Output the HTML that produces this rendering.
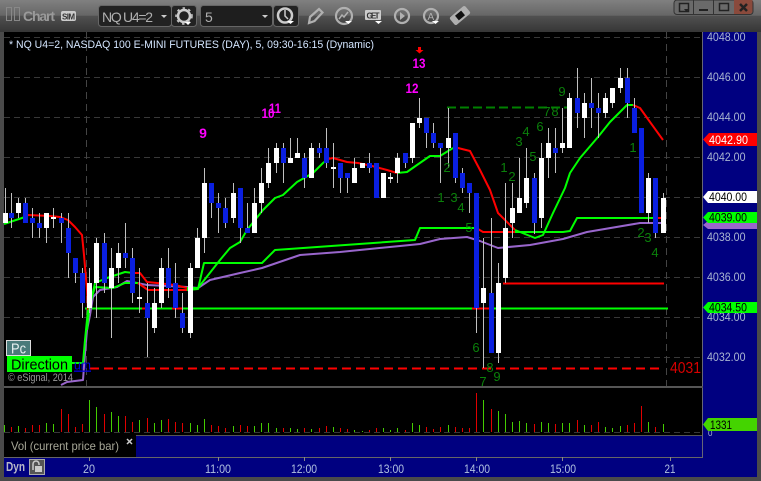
<!DOCTYPE html>
<html><head><meta charset="utf-8"><style>
html,body{margin:0;padding:0;background:#4a4a4a;overflow:hidden}
svg{display:block}
text{font-family:"Liberation Sans",sans-serif}
</style></head><body>
<svg width="761" height="481" viewBox="0 0 761 481" xmlns="http://www.w3.org/2000/svg">
<defs><linearGradient id="t" x1="0" y1="0" x2="0" y2="1"><stop offset="0" stop-color="#808080"/><stop offset=".48" stop-color="#666"/><stop offset=".5" stop-color="#505050"/><stop offset="1" stop-color="#363636"/></linearGradient></defs>
<rect width="761" height="481" fill="#4a4a4a"/>
<rect width="761" height="32" fill="url(#t)"/>
<!-- title bar -->
<g fill="none" stroke="#888" stroke-width="1"><rect x="6.500" y="7.500" width="5" height="13"/><rect x="14.500" y="7.500" width="5" height="13"/></g>
<text x="23" y="21" font-size="14" font-weight="bold" fill="#9a9a9a" textLength="32">Chart</text>
<rect x="61" y="11" width="15" height="10" rx="2" fill="#ccc"/><text x="62" y="19.500" font-size="8" font-weight="bold" fill="#333" textLength="13">SIM</text>
<rect x="98.500" y="5.500" width="73" height="21" rx="3" fill="#222" stroke="#666"/>
<text x="102" y="22" font-size="14" fill="#b0b0b0" textLength="51">NQ U4=2</text>
<path d="M161 15h6l-3 3z" fill="#ccc"/>
<rect x="171.500" y="5.500" width="25" height="21" rx="3" fill="#222" stroke="#666"/>
<circle cx="184" cy="16" r="6" fill="none" stroke="#ccc" stroke-width="2.500"/><circle cx="184" cy="16" r="8" fill="none" stroke="#ccc" stroke-width="1.500" stroke-dasharray="2.500 3.500"/>
<path d="M185 22h6l-3 3z" fill="#fff"/>
<rect x="200.500" y="5.500" width="72" height="21" rx="3" fill="#1e1e1e" stroke="#666"/>
<text x="205" y="22" font-size="14" fill="#b0b0b0">5</text>
<path d="M262 15h6l-3 3z" fill="#ccc"/>
<rect x="273.500" y="5.500" width="25" height="21" rx="3" fill="#222" stroke="#666"/>
<circle cx="285" cy="15.500" r="7" fill="none" stroke="#ccc" stroke-width="2.500"/><path d="M285 10v6l3 3" fill="none" stroke="#ccc" stroke-width="1.500"/><path d="M287 21h7l-3.500 3z" fill="#fff"/>
<!-- tools -->
<path d="M309 23l1-6 9-8 3.500 3.500-8 8.500z" fill="none" stroke="#b0b0b0" stroke-width="2.200"/>
<circle cx="344" cy="16" r="8" fill="none" stroke="#b0b0b0" stroke-width="2.200"/><path d="M339 19l3-4 2 2 4-5" fill="none" stroke="#b0b0b0" stroke-width="1.500"/><path d="M345 21h7l-3.500 3z" fill="#fff"/>
<rect x="365" y="10" width="16" height="10" rx="1" fill="#ccc"/><text x="366.500" y="18.500" font-size="8" font-weight="bold" fill="#333" textLength="13">GET</text><path d="M375 21h7l-3.500 3z" fill="#fff"/>
<circle cx="402" cy="16" r="7" fill="none" stroke="#b0b0b0" stroke-width="2.200"/><path d="M400 12l5 4-5 4z" fill="#b0b0b0"/>
<circle cx="431" cy="16" r="7" fill="none" stroke="#b0b0b0" stroke-width="2.200"/><text x="427.500" y="20" font-size="10" fill="#b0b0b0">A</text><path d="M432 21h7l-3.500 3z" fill="#fff"/>
<g transform="rotate(-40 460 15.500)"><rect x="450" y="10.500" width="20" height="10" rx="2" fill="#b0b0b0"/><rect x="456" y="12.500" width="8" height="6" fill="#111"/></g>
<!-- window buttons -->
<rect x="674" y="0" width="79" height="14.500" rx="3" fill="#6a6a6a" stroke="#333"/>
<path d="M693.500 0v14M713.500 0v14" stroke="#333"/>
<path d="M734 0h18.500v11a3 3 0 0 1-3 3h-15.500z" fill="#8a4a3c"/>
<rect x="679.500" y="3.500" width="9" height="8" fill="none" stroke="#222" stroke-width="1.500"/><path d="M684 9h5l-2.500 3z" fill="#222"/>
<rect x="699" y="9" width="9" height="2" fill="#222"/>
<rect x="719.500" y="3.500" width="9" height="7" fill="none" stroke="#222" stroke-width="1.500"/>
<path d="M740 4l7 7M747 4l-7 7" stroke="#222" stroke-width="2.500"/>
<!-- main panel -->
<rect x="4" y="32" width="699" height="354" fill="#000"/>
<rect x="703" y="32" width="54" height="445" fill="#000080"/>
<rect x="702" y="32" width="1" height="425" fill="#667"/>
<rect x="4" y="386" width="699" height="2" fill="#555"/>
<rect x="4" y="388" width="698" height="47" fill="#000"/>
<rect x="4" y="435" width="698" height="22" fill="#000080"/>
<rect x="4" y="435" width="132" height="22" fill="#000"/>
<rect x="136" y="435" width="566" height="1" fill="#555"/>
<rect x="4" y="457" width="699" height="20" fill="#000080"/>
<rect x="4" y="457" width="699" height="1" fill="#666"/>
<!-- grid -->
<g stroke="#383838" shape-rendering="crispEdges" stroke-dasharray="6 4" fill="none">
<path d="M4 37.500H702M4 77.500H702M4 117.500H702M4 157.500H702M4 197.500H702M4 237.500H702M4 277.500H702M4 317.500H702M94 357.500H702M4 432.500H702"/>
<path d="M86.500 32V386M666.500 32V386" stroke="#444" stroke-dasharray="7 5"/>
</g>
<!-- indicator lines -->
<g fill="none" stroke-linejoin="round">
<path d="M85 308.500H668" stroke="#00ff00" stroke-width="2"/>
<path d="M142 308.500h6M172 308.500h10M472 308.500h18" stroke="#f00" stroke-width="2"/>
<path d="M503 283.500H664" stroke="#f00" stroke-width="2"/>
<path d="M90 368.500H664" stroke="#f00" stroke-width="2" stroke-dasharray="9 5"/>
<path d="M447 107.500H568" stroke="#008000" stroke-width="2" stroke-dasharray="9 4"/>
<path d="M61 385L67 382 83 380 85 353 87 330 90 315 93 297 100 290 117 287 127 281 147 285 187 287 198 288 210 280 240 273 262 268 300 255 340 252 400 246 420 244 440 239 467 237 480 241 498 248 530 245 563 239 587 232 640 223 663 223" stroke="#9966cc" stroke-width="2"/>
<path d="M72 363H83L85 340 88 310 95 287 113 288 125 283H138" stroke="#00ff00" stroke-width="2"/>
<path d="M138 283L148 290H187" stroke="#f00" stroke-width="2"/>
<path d="M187 290L198 289 204 263H262L275 250 415 240 420 228H478" stroke="#00ff00" stroke-width="2"/>
<path d="M478 229L483 232H515" stroke="#f00" stroke-width="2"/>
<path d="M515 232H563L570 231 577 218H653" stroke="#00ff00" stroke-width="2"/>
<path d="M653 218H664" stroke="#f00" stroke-width="2"/>
<path d="M4 224L16 220 28 216" stroke="#00ff00" stroke-width="2"/>
<path d="M28 215L50 216 60 217 68 220 75 227 82 235 84 255 87 290 88 310" stroke="#f00" stroke-width="2"/>
<path d="M87 330L89 310 95 283 107 278 125 272 133 273" stroke="#00ff00" stroke-width="2"/>
<path d="M133 273L140 273 147 282 157 283 175 285 187 288" stroke="#f00" stroke-width="2"/>
<path d="M187 288L198 288 220 260 230 248 240 242 247 230 263 210 275 198 283 195 297 182 313 173 323 163 328 159" stroke="#00ff00" stroke-width="2"/>
<path d="M328 159L333 158 347 162 358 163 372 166 387 170 397 173" stroke="#f00" stroke-width="2"/>
<path d="M397 173L407 172 417 165 430 156 440 156 453 148" stroke="#00ff00" stroke-width="2"/>
<path d="M453 148L458 148 470 151 480 170 490 190 498 213 515 230" stroke="#f00" stroke-width="2"/>
<path d="M515 230L535 238 543 235 553 213 565 188 570 173 580 158 598 137 610 122 627 105 633 105" stroke="#00ff00" stroke-width="2"/>
<path d="M633 105L640 108 650 122 663 140" stroke="#f00" stroke-width="2"/>
</g>
<!-- candles -->
<g transform="translate(.5,0)" fill="none" shape-rendering="crispEdges">
<path stroke="#c0c0c0" d="M5 188V223M11 193V228M18 198V218M25 198V223M32 208V238M39 213V238M46 213V243M53 208V228M61 213V243M68 213V278M75 258V283M82 268V318M89 268V313M96 238V318M104 233V293M111 248V338M118 243V283M125 223V268M132 248V303M139 268V313M147 283V357M154 288V333M161 258V308M168 248V298M175 263V318M182 293V333M190 263V338M197 228V253M204 168V253M211 183V218M218 193V233M225 198V228M233 183V223M240 188V243M247 203V233M254 188V233M261 168V213M268 148V188M276 143V173M283 143V183M290 138V163M297 138V158M304 153V188M311 143V178M319 143V158M326 128V168M333 143V188M340 163V193M347 173V193M354 158V183M362 163V168M369 153V173M376 163V198M383 173V198M390 173V183M397 153V183M405 153V168M412 123V163M419 98V128M426 118V148M433 123V148M440 143V183M448 108V168M455 133V183M462 168V193M469 183V213M476 193V333M483 238V368M491 218V353M498 263V363M505 183V283M512 183V238M519 158V213M526 148V208M534 173V234M541 143V228M548 128V178M555 128V173M562 108V153M569 93V148M577 68V128M584 93V138M591 78V128M598 93V138M605 93V118M612 88V108M620 68V93M627 68V118M634 98V133M641 128V213M648 173V223M655 178V238M663 193V233"/>
<path stroke="#fff" stroke-width="5" d="M5 213V223M18 203V213M46 213V228M53 217V219M89 283V308M96 243V283M111 268V288M118 253V268M139 297V299M154 303V328M161 268V303M190 268V333M197 238V268M204 183V238M233 193V218M254 203V233M261 183V203M268 163V183M276 148V163M290 158V163M297 153V158M311 148V178M333 167V169M354 168V183M362 163V168M383 173V198M390 177V179M397 158V173M412 123V158M419 118V123M448 138V148M483 288V303M498 283V353M505 228V278M512 208V223M519 198V213M526 178V203M541 158V218M548 143V158M562 143V148M569 98V148M584 103V118M605 98V113M612 88V103M620 78V88M648 178V213M663 198V233"/>
<path stroke="#0a1fe0" stroke-width="5" d="M11 213V218M25 203V223M32 218V223M39 223V228M61 218V223M68 228V253M75 258V273M82 273V303M104 243V283M125 253V258M132 258V293M147 303V318M168 268V288M175 283V308M182 313V328M211 183V203M218 203V208M225 208V223M240 188V228M247 228V233M283 148V163M304 158V178M319 148V153M326 148V163M340 163V178M347 173V178M369 163V168M376 163V198M405 153V163M426 118V133M433 133V143M440 143V148M455 133V178M462 173V188M469 183V193M476 193V308M491 293V353M534 178V223M555 148V153M577 98V113M591 103V108M598 108V113M627 78V103M634 108V133M641 128V213M655 178V233"/>
</g>
<!-- volume -->
<g transform="translate(.5,0)" fill="none" shape-rendering="crispEdges">
<path stroke="#44cc00" d="M4 432V425M18 432V426M46 432V423M53 432V424M89 432V400M96 432V407M111 432V412M118 432V416M139 432V420M154 432V423M161 432V420M190 432V423M197 432V425M204 432V419M233 432V426M254 432V426M261 432V423M268 432V423M276 432V428M290 432V428M297 432V429M311 432V429M333 432V427M354 432V430M362 432V431M383 432V428M390 432V430M397 432V428M412 432V423M419 432V425M448 432V425M483 432V400M498 432V411M505 432V414M512 432V422M519 432V421M526 432V423M541 432V422M548 432V423M562 432V423M569 432V423M584 432V425M605 432V427M612 432V428M620 432V426M648 432V422M663 432V424"/>
<path stroke="#e00000" d="M11 432V427M25 432V428M32 432V425M39 432V425M61 432V409M68 432V414M75 432V427M82 432V424M104 432V414M125 432V416M132 432V422M147 432V418M168 432V419M175 432V422M182 432V423M211 432V425M218 432V426M225 432V428M240 432V425M247 432V426M283 432V428M304 432V428M319 432V428M326 432V426M340 432V428M347 432V429M369 432V430M376 432V428M405 432V430M426 432V427M433 432V429M440 432V427M455 432V427M462 432V428M469 432V428M476 432V393M491 432V409M534 432V424M555 432V424M577 432V420M591 432V425M598 432V422M627 432V425M634 432V423M641 432V406M655 432V427"/>
</g>
<!-- title text -->
<text x="9" y="48" font-size="11" fill="#d4e6ff" textLength="365" lengthAdjust="spacingAndGlyphs">* NQ U4=2, NASDAQ 100 E-MINI FUTURES (DAY), 5, 09:30-16:15 (Dynamic)</text>
<!-- magenta labels -->
<g font-size="14" font-weight="bold" fill="#ff00ff" text-anchor="middle">
<text x="203" y="138">9</text>
<text x="268" y="118" textLength="13" lengthAdjust="spacingAndGlyphs">10</text>
<text x="275" y="113" textLength="12" lengthAdjust="spacingAndGlyphs">11</text>
<text x="412" y="93" textLength="13" lengthAdjust="spacingAndGlyphs">12</text>
<text x="419" y="68" textLength="13" lengthAdjust="spacingAndGlyphs">13</text>
</g>
<path d="M418 47h3v3h2.500l-4 3.500-4-3.500h2.500z" fill="#f00"/>
<!-- green labels -->
<g font-size="13" fill="#0a800a" text-anchor="middle">
<text x="441" y="202">1</text><text x="454" y="202">3</text><text x="461" y="212">4</text><text x="469" y="232">5</text><text x="476" y="352">6</text><text x="483" y="386">7</text><text x="490" y="372">8</text><text x="497" y="381">9</text><text x="447" y="172">2</text><text x="504" y="172">1</text><text x="512" y="181">2</text><text x="519" y="146">3</text><text x="526" y="136">4</text><text x="533" y="161">5</text><text x="540" y="131">6</text><text x="547" y="116">7</text><text x="555" y="116">8</text><text x="562" y="96">9</text><text x="633" y="152">1</text><text x="641" y="237">2</text><text x="648" y="242">3</text><text x="655" y="257">4</text>
</g>
<!-- overlays -->
<rect x="6.500" y="340.500" width="24" height="15" fill="#4a7a7a" stroke="#ddd"/>
<text x="11" y="353.500" font-size="15" fill="#e8f0f0" textLength="15" lengthAdjust="spacingAndGlyphs">Pc</text>
<rect x="7" y="356" width="65" height="16" fill="#00ff00"/>
<text x="11" y="369.500" font-size="15" fill="#000" textLength="57" lengthAdjust="spacingAndGlyphs">Direction</text>
<text x="74" y="369.500" font-size="13" fill="#0000e0" text-decoration="underline" textLength="17" lengthAdjust="spacingAndGlyphs">um</text>
<text x="8" y="381" font-size="11" fill="#999" textLength="65" lengthAdjust="spacingAndGlyphs">© eSignal, 2014</text>
<text x="670" y="373" font-size="16" fill="#d80000" textLength="31" lengthAdjust="spacingAndGlyphs">4031</text>
<!-- axis labels -->
<g font-size="12" fill="#a8b4d0">
<text x="707" y="41" textLength="38.500" lengthAdjust="spacingAndGlyphs">4048.00</text><text x="707" y="81" textLength="38.500" lengthAdjust="spacingAndGlyphs">4046.00</text><text x="707" y="121" textLength="38.500" lengthAdjust="spacingAndGlyphs">4044.00</text><text x="707" y="161" textLength="38.500" lengthAdjust="spacingAndGlyphs">4042.00</text><text x="707" y="241" textLength="38.500" lengthAdjust="spacingAndGlyphs">4038.00</text><text x="707" y="281" textLength="38.500" lengthAdjust="spacingAndGlyphs">4036.00</text><text x="707" y="321" textLength="38.500" lengthAdjust="spacingAndGlyphs">4034.00</text><text x="707" y="361" textLength="38.500" lengthAdjust="spacingAndGlyphs">4032.00</text>
</g>
<path d="M703 225l5-4h49v8h-49z" fill="#9966cc"/>
<path d="M703 139.500l6-6.500h48v13h-48z" fill="#f00"/><text x="709" y="144" font-size="12" fill="#fff" textLength="39" lengthAdjust="spacingAndGlyphs">4042.90</text>
<path d="M703 197l5-6h49v12h-49z" fill="#fff"/><text x="709" y="201" font-size="12" fill="#000" textLength="38" lengthAdjust="spacingAndGlyphs">4040.00</text>
<path d="M703 217.500l5-5.500h49v11h-49z" fill="#00ff00"/><text x="709" y="221.500" font-size="12" fill="#000" textLength="38" lengthAdjust="spacingAndGlyphs">4039.00</text>
<path d="M703 307.500l5-5.500h49v11h-49z" fill="#00ff00"/><text x="709" y="311.500" font-size="12" fill="#000" textLength="38" lengthAdjust="spacingAndGlyphs">4034.50</text>
<text x="708" y="436" font-size="8" fill="#a8b4d0">0</text>
<path d="M703 424.500l5-6.500h49v13h-49z" fill="#44d400"/><text x="710" y="429" font-size="12" fill="#000" textLength="22" lengthAdjust="spacingAndGlyphs">1331</text>
<!-- vol tab -->
<text x="11" y="450" font-size="12" fill="#a8a898" textLength="108" lengthAdjust="spacingAndGlyphs">Vol (current price bar)</text>
<path d="M127 439l5 5M132 439l-5 5" stroke="#ccc" stroke-width="1.500"/>
<!-- bottom axis -->
<text x="6" y="471" font-size="13" font-weight="bold" fill="#b8b8c8" textLength="19" lengthAdjust="spacingAndGlyphs">Dyn</text>
<rect x="29.500" y="459.500" width="15" height="15" fill="#555" stroke="#aaa"/>
<path d="M33 470v-6a3 3 0 0 1 6 0v1" fill="none" stroke="#ccc" stroke-width="1.500"/><rect x="35" y="466" width="7" height="6" fill="#ccc"/>
<g stroke="#888" shape-rendering="crispEdges"><path d="M89.500 457v4M218.500 457v4M304.500 457v4M390.500 457v4M476.500 457v4M562.500 457v4M670.500 457v4"/></g>
<g font-size="12" fill="#b0c0e0" text-anchor="middle">
<text x="89" y="473" textLength="12" lengthAdjust="spacingAndGlyphs">20</text>
<text x="218" y="473" textLength="26" lengthAdjust="spacingAndGlyphs">11:00</text>
<text x="304" y="473" textLength="26" lengthAdjust="spacingAndGlyphs">12:00</text>
<text x="391" y="473" textLength="26" lengthAdjust="spacingAndGlyphs">13:00</text>
<text x="477" y="473" textLength="26" lengthAdjust="spacingAndGlyphs">14:00</text>
<text x="563" y="473" textLength="26" lengthAdjust="spacingAndGlyphs">15:00</text>
<text x="670" y="473" textLength="11" lengthAdjust="spacingAndGlyphs">21</text>
</g>
</svg>
</body></html>
